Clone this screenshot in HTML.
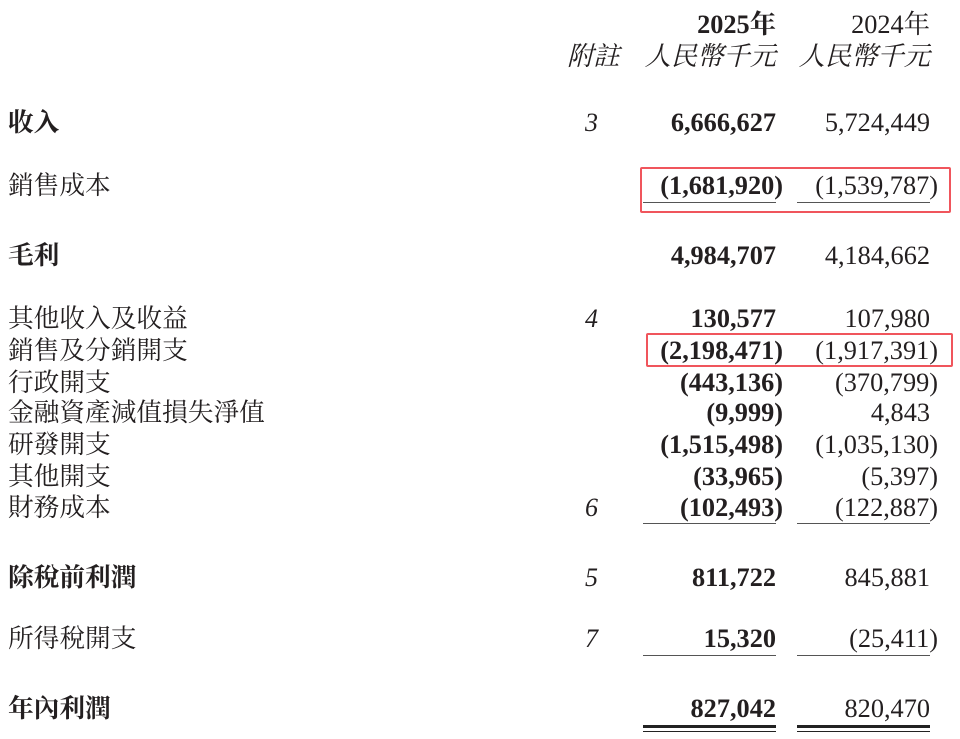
<!DOCTYPE html>
<html><head><meta charset="utf-8"><style>
body{margin:0;width:960px;height:739px;background:#fff;position:relative;overflow:hidden;font-family:"Liberation Serif","Noto Serif CJK SC",serif;color:#231f20;}
div{position:absolute;white-space:nowrap;line-height:1;}
.l{left:8px;font-size:25.7px;margin-top:1px;}
.b{font-weight:bold;}
.n{font-size:26.3px;margin-top:1px;}
.a{right:184px;font-weight:bold;}
.ap{right:177px;font-weight:bold;}
.c{right:30px;}
.cp{right:22px;}
.note{left:585px;font-style:italic;font-size:26px;margin-top:1px;}
.u{height:1px;background:#555;}
.u1{left:643px;width:133px;}
.u2{left:797px;width:133px;}
.dd{height:3px;background:#222;}
.box{border:2px solid #f0555c;border-radius:2px;}
</style></head><body>
<div class="n b" style="right:184px;top:11px;">2025年</div>
<div class="n" style="right:30px;top:11px;">2024年</div>
<div class="n" style="left:567px;top:43px;font-style:italic;">附註</div>
<div class="n" style="right:184px;top:43px;font-style:italic;">人民幣千元</div>
<div class="n" style="right:30px;top:43px;font-style:italic;">人民幣千元</div>

<div class="l b" style="top:109px;">收入</div>
<div class="note" style="top:109px;">3</div>
<div class="n a" style="top:109px;">6,666,627</div>
<div class="n c" style="top:109px;">5,724,449</div>

<div class="l" style="top:172px;">銷售成本</div>
<div class="n ap" style="top:172px;">(1,681,920)</div>
<div class="n cp" style="top:172px;">(1,539,787)</div>
<div class="u u1" style="top:202px;"></div><div class="u u2" style="top:202px;"></div>
<div class="box" style="left:640px;top:167px;width:307px;height:42px;"></div>

<div class="l b" style="top:242px;">毛利</div>
<div class="n a" style="top:242px;">4,984,707</div>
<div class="n c" style="top:242px;">4,184,662</div>

<div class="l" style="top:305px;">其他收入及收益</div>
<div class="note" style="top:305px;">4</div>
<div class="n a" style="top:305px;">130,577</div>
<div class="n c" style="top:305px;">107,980</div>

<div class="l" style="top:337px;">銷售及分銷開支</div>
<div class="n ap" style="top:337px;">(2,198,471)</div>
<div class="n cp" style="top:337px;">(1,917,391)</div>
<div class="box" style="left:646px;top:333px;width:303px;height:30px;"></div>

<div class="l" style="top:369px;">行政開支</div>
<div class="n ap" style="top:369px;">(443,136)</div>
<div class="n cp" style="top:369px;">(370,799)</div>

<div class="l" style="top:399px;">金融資產減值損失淨值</div>
<div class="n ap" style="top:399px;">(9,999)</div>
<div class="n c" style="top:399px;">4,843</div>

<div class="l" style="top:431px;">研發開支</div>
<div class="n ap" style="top:431px;">(1,515,498)</div>
<div class="n cp" style="top:431px;">(1,035,130)</div>

<div class="l" style="top:463px;">其他開支</div>
<div class="n ap" style="top:463px;">(33,965)</div>
<div class="n cp" style="top:463px;">(5,397)</div>

<div class="l" style="top:494px;">財務成本</div>
<div class="note" style="top:494px;">6</div>
<div class="n ap" style="top:494px;">(102,493)</div>
<div class="n cp" style="top:494px;">(122,887)</div>
<div class="u u1" style="top:523px;"></div><div class="u u2" style="top:523px;"></div>

<div class="l b" style="top:564px;">除稅前利潤</div>
<div class="note" style="top:564px;">5</div>
<div class="n a" style="top:564px;">811,722</div>
<div class="n c" style="top:564px;">845,881</div>

<div class="l" style="top:625px;">所得稅開支</div>
<div class="note" style="top:625px;">7</div>
<div class="n a" style="top:625px;">15,320</div>
<div class="n cp" style="top:625px;">(25,411)</div>
<div class="u u1" style="top:655px;"></div><div class="u u2" style="top:655px;"></div>

<div class="l b" style="top:695px;">年內利潤</div>
<div class="n a" style="top:695px;">827,042</div>
<div class="n c" style="top:695px;">820,470</div>
<div class="dd u1" style="top:725px;"></div><div class="dd u2" style="top:725px;"></div>
<div class="u u1" style="top:731px;background:#222;"></div><div class="u u2" style="top:731px;background:#222;"></div>
</body></html>
